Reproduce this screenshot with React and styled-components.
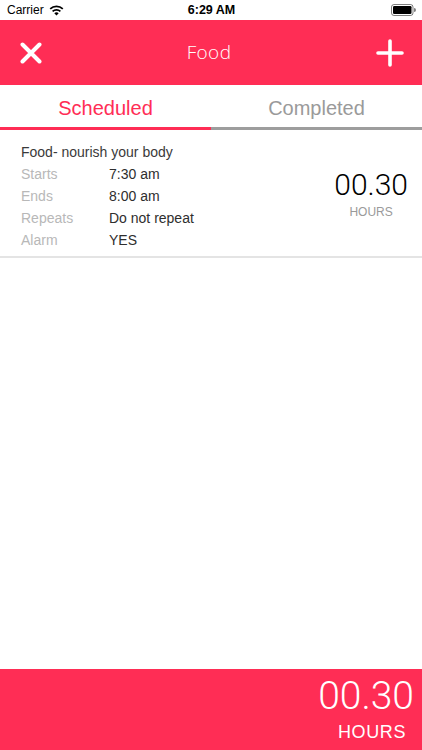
import React from "react";
import styled, { createGlobalStyle } from "styled-components";

const PINK = "#ff2d55";

const GlobalStyle = createGlobalStyle`
  html, body {
    margin: 0;
    padding: 0;
    background: #fff;
  }
  body {
    font-family: "Liberation Sans", Arial, sans-serif;
    -webkit-font-smoothing: antialiased;
  }
`;

const Screen = styled.div`
  width: 422px;
  height: 750px;
  display: flex;
  flex-direction: column;
  overflow: hidden;
  background: #fff;
`;

const StatusBar = styled.div`
  height: 20px;
  display: grid;
  grid-template-columns: 1fr auto 1fr;
  align-items: center;
  padding: 0 6px 0 7px;
  font-size: 12px;
  color: #000;
`;

const Carrier = styled.div`
  display: flex;
  align-items: center;
  gap: 5px;
`;

const Clock = styled.div`
  font-weight: bold;
  font-size: 12.5px;
`;

const Battery = styled.div`
  justify-self: end;
  display: flex;
  align-items: center;
`;

const Header = styled.header`
  height: 65px;
  background: ${PINK};
  display: flex;
  align-items: center;
  justify-content: space-between;
  padding: 0 18px 0 20px;
`;

const Title = styled.h1`
  margin: 0 0 2px;
  font-family: "Open Sans", "Liberation Sans", sans-serif;
  font-weight: 300;
  font-size: 19px;
  color: #fff;
  letter-spacing: 0.4px;
`;

const IconButton = styled.button`
  background: none;
  border: 0;
  padding: 0;
  display: flex;
  width: ${p => p.$size}px;
  height: ${p => p.$size}px;
`;

const Tabs = styled.nav`
  display: flex;
  height: 45px;
`;

const Tab = styled.div`
  flex: 1;
  display: flex;
  align-items: center;
  justify-content: center;
  padding-top: 4px;
  font-size: 20px;
  color: ${p => (p.$active ? PINK : "#9a9a9a")};
  border-bottom: 3px solid ${p => (p.$active ? PINK : "#9d9d9d")};
`;

const Entry = styled.div`
  display: flex;
  justify-content: space-between;
  align-items: center;
  padding: 11px 14px 5px 21px;
  border-bottom: 2px solid #e4e4e4;
`;

const Details = styled.div`
  display: flex;
  flex-direction: column;
`;

const EntryTitle = styled.div`
  font-size: 14px;
  color: #3a3a3a;
  line-height: 22px;
`;

const DetailRow = styled.div`
  display: grid;
  grid-template-columns: 88px auto;
  font-size: 14px;
  line-height: 22px;
`;

const Label = styled.span`
  color: #b8b8b8;
`;

const Value = styled.span`
  color: #2e2e2e;
`;

const Duration = styled.div`
  display: flex;
  flex-direction: column;
  align-items: ${p => (p.$align === "right" ? "flex-end" : "center")};
  margin-top: ${p => p.$offset || 0}px;
`;

const Amount = styled.div`
  font-family: Roboto, "Liberation Sans", sans-serif;
  font-weight: 300;
  font-size: ${p => p.$size}px;
  line-height: 1;
  color: ${p => p.$color};
`;

const Unit = styled.div`
  font-size: ${p => p.$size}px;
  color: ${p => p.$color};
  margin-top: ${p => p.$gap}px;
  margin-right: ${p => p.$shift || 0}px;
  letter-spacing: ${p => p.$spacing || 0}px;
`;

const Spacer = styled.div`
  flex: 1;
`;

const Footer = styled.footer`
  height: 81px;
  background: ${PINK};
  display: flex;
  justify-content: flex-end;
  align-items: flex-start;
  padding: 8px 8px 0 0;
  box-sizing: border-box;
`;

const Wifi = () => (
  <svg width="15" height="11" viewBox="0 0 15 11">
    <path d="M7.5 10.6 L5.3 8.2 A3.2 3.2 0 0 1 9.7 8.2 Z" fill="#000" />
    <path d="M3.6 6.4 A5.6 5.6 0 0 1 11.4 6.4" stroke="#000" strokeWidth="1.7" fill="none" />
    <path d="M1.2 3.9 A9 9 0 0 1 13.8 3.9" stroke="#000" strokeWidth="1.7" fill="none" />
  </svg>
);

const BatteryIcon = () => (
  <svg width="25" height="12" viewBox="0 0 25 12">
    <rect x="0.5" y="0.5" width="21.5" height="11" rx="2.5" fill="none" stroke="#000" strokeOpacity="0.5" />
    <rect x="2" y="2" width="18.5" height="8" rx="1.2" fill="#000" />
    <path d="M23 4 v4 a1.6 1.6 0 0 0 0 -4z" fill="#000" fillOpacity="0.5" />
  </svg>
);

const CloseIcon = () => (
  <svg width="22" height="22" viewBox="0 0 22 22">
    <path d="M2.5 2.5 L19.5 19.5 M19.5 2.5 L2.5 19.5" stroke="#fff" strokeWidth="4" strokeLinecap="round" />
  </svg>
);

const PlusIcon = () => (
  <svg width="28" height="28" viewBox="0 0 28 28">
    <path d="M14 2 V26 M2 14 H26" stroke="#fff" strokeWidth="3.6" strokeLinecap="round" />
  </svg>
);

const details = [
  ["Starts", "7:30 am"],
  ["Ends", "8:00 am"],
  ["Repeats", "Do not repeat"],
  ["Alarm", "YES"],
];

export default function App() {
  return (
    <>
      <GlobalStyle />
      <Screen>
        <StatusBar>
          <Carrier>
            Carrier <Wifi />
          </Carrier>
          <Clock>6:29 AM</Clock>
          <Battery>
            <BatteryIcon />
          </Battery>
        </StatusBar>
        <Header>
          <IconButton $size={22}>
            <CloseIcon />
          </IconButton>
          <Title>Food</Title>
          <IconButton $size={28}>
            <PlusIcon />
          </IconButton>
        </Header>
        <Tabs>
          <Tab $active>Scheduled</Tab>
          <Tab>Completed</Tab>
        </Tabs>
        <Entry>
          <Details>
            <EntryTitle>Food- nourish your body</EntryTitle>
            {details.map(([label, value]) => (
              <DetailRow key={label}>
                <Label>{label}</Label>
                <Value>{value}</Value>
              </DetailRow>
            ))}
          </Details>
          <Duration $offset={-4}>
            <Amount $size={30} $color="#000">00.30</Amount>
            <Unit $size={12} $color="#9a9a9a" $gap={5}>HOURS</Unit>
          </Duration>
        </Entry>
        <Spacer />
        <Footer>
          <Duration $align="right">
            <Amount $size={39} $color="#fff">00.30</Amount>
            <Unit $size={18} $color="#fff" $gap={6} $shift={8} $spacing={0.6}>HOURS</Unit>
          </Duration>
        </Footer>
      </Screen>
    </>
  );
}
